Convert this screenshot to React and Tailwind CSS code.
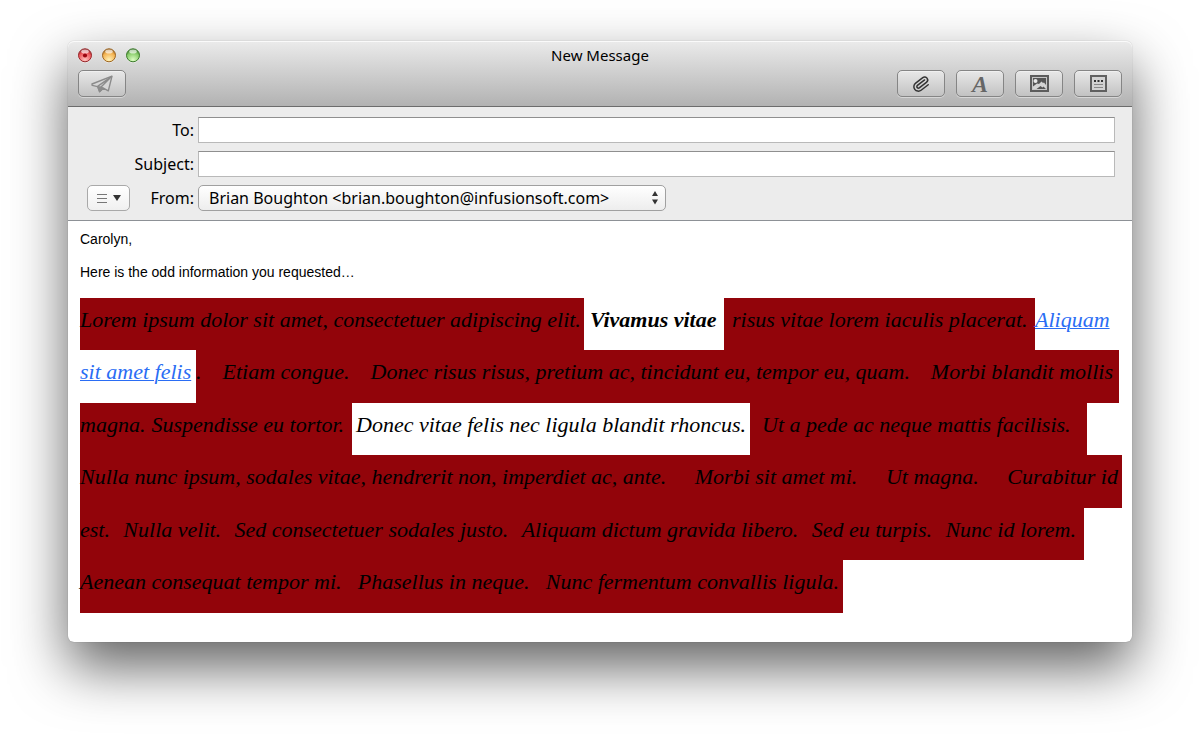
import React from "react";

const toolButton =
  "flex h-[27px] w-[48px] items-center justify-center rounded-[5px] border border-[#858585] bg-gradient-to-b from-[#e8e8e8] to-[#c2c2c2] shadow-[inset_0_1px_0_#f0f0f0,0_1px_0_#d6d6d6]";

const field =
  "h-[26px] w-full border border-[#b9b9b9] border-t-[#8f8f8f] bg-white px-1 text-[16px] outline-none";

function Light({ label, id, dark, mid, glow, dot }) {
  return (
    <button type="button" aria-label={label} className="h-[15px] w-[15px]">
      <svg viewBox="0 0 15 15" className="h-[15px] w-[15px]">
        <defs>
          <radialGradient id={id} cx="50%" cy="85%" r="80%">
            <stop offset="0" stopColor={glow} />
            <stop offset="0.7" stopColor={mid} />
            <stop offset="1" stopColor={dark} />
          </radialGradient>
        </defs>
        <circle cx="7" cy="8" r="7" fill="#fff" opacity="0.5" />
        <circle cx="7" cy="7.3" r="6.5" fill={`url(#${id})`} stroke={dark} strokeWidth="1" />
        <ellipse cx="7" cy="3.6" rx="3.8" ry="2" fill="#fff" opacity="0.65" />
        {dot && <circle cx="7" cy="7.5" r="2.1" fill="#9c0610" />}
      </svg>
    </button>
  );
}

function PlaneIcon() {
  return (
    <svg viewBox="0 0 22 18" className="h-[18px] w-[22px]" fill="none" stroke="#8b8b8b" strokeWidth="1.4" strokeLinejoin="round">
      <path d="M1 9 L21 1.200 L17.300 15.800 L12.400 13.200 L8.600 16.800 L6.600 11.600 L1.200 10.400 Z" fill="#d6d6d6" />
      <path d="M6.600 11.400 L20.500 1.600 L9.800 12.200 L12.400 13.200" />
      <path d="M6.800 11.600 L9.800 12.200 L11.600 13.600 L8.600 16.600 Z" fill="#8b8b8b" />
    </svg>
  );
}

function ClipIcon() {
  return (
    <svg viewBox="0 0 24 24" className="h-[18px] w-[18px]" fill="none" stroke="#333" strokeWidth="2" strokeLinecap="round" strokeLinejoin="round">
      <g transform="rotate(8 12 12)">
        <path d="m16 6-8.414 8.586a2 2 0 0 0 2.829 2.829l8.414-8.586a4 4 0 1 0-5.657-5.657l-8.379 8.551a6 6 0 1 0 8.485 8.485l8.379-8.551" />
      </g>
    </svg>
  );
}

function PhotoIcon() {
  return (
    <svg viewBox="0 0 19 17" className="h-[17px] w-[19px]">
      <rect width="19" height="17" fill="#5c5c5c" />
      <rect x="2" y="2" width="15" height="13" fill="#c6c6c6" />
      <rect x="3" y="3" width="13" height="11" fill="#565656" />
      <path d="M3 14 V11.500 L7 8.500 L9 9 L11.500 6.500 L13 8 L14 7.500 L16 10 V14 L13.500 11.500 L12.500 12.500 L10.500 11 L6.500 14 Z" fill="#d4d4d4" />
      <circle cx="5.500" cy="6" r="2" fill="#e9e9e9" />
    </svg>
  );
}

function StationeryIcon() {
  return (
    <svg viewBox="0 0 17 17" className="h-[17px] w-[17px]">
      <rect width="17" height="17" fill="#606060" />
      <rect x="2" y="2" width="13" height="13" fill="#d2d2d2" />
      <path d="M4 5h2v2H4zM7.500 5h2v2h-2zM11 5h2v2h-2z" fill="#333" />
      <path d="M4 9.500h9M4 12.500h9" stroke="#888" />
    </svg>
  );
}

const mark = "flex shrink-0 justify-between bg-[#92040a]";
const plain = "block shrink-0";
const line = "flex h-[52px] items-stretch";
const tallLine = "flex h-[53px] items-stretch";

function Sentences({ items }) {
  return items.map((text) => <span key={text}>{text}</span>);
}

export default function App() {
  return (
    <div className="min-h-screen bg-white px-[68px] pb-[94px] pt-[41px] text-black">
      <main className="rounded-[6px] bg-white font-['Noto_Sans','Open_Sans',sans-serif] shadow-[0_0_1px_rgba(0,0,0,0.4),0_25px_55px_rgba(0,0,0,0.62)]">
        <header className="rounded-t-[6px] border-b border-[#6c6c6c] bg-gradient-to-b from-[#ebebeb] to-[#b2b2b2] px-[10px] pb-[9px] pt-[4px] shadow-[inset_0_1px_0_#fafafa]">
          <div className="grid h-[20px] grid-cols-[1fr_auto_1fr] items-center">
            <div className="flex gap-[9px]">
              <Light label="Close" id="red" dark="#94262a" mid="#ec5458" glow="#ffc4c0" dot />
              <Light label="Minimize" id="amber" dark="#9a6422" mid="#f3b04e" glow="#fff2b8" />
              <Light label="Zoom" id="green" dark="#3c7a2c" mid="#84c966" glow="#deffc4" />
            </div>
            <h1 className="text-[15px] leading-[20px]">New Message</h1>
          </div>
          <div className="mt-[5px] flex justify-between">
            <button type="button" aria-label="Send" className={toolButton}>
              <PlaneIcon />
            </button>
            <div className="flex gap-[11px]">
              <button type="button" aria-label="Attach" className={toolButton}>
                <ClipIcon />
              </button>
              <button type="button" aria-label="Fonts" className={toolButton}>
                <span className="font-['Liberation_Serif',serif] text-[24px] font-bold italic leading-[24px] text-[#666]">A</span>
              </button>
              <button type="button" aria-label="Photos" className={toolButton}>
                <PhotoIcon />
              </button>
              <button type="button" aria-label="Stationery" className={toolButton}>
                <StationeryIcon />
              </button>
            </div>
          </div>
        </header>

        <form className="flex flex-col gap-[8px] border-b border-[#8d9196] bg-[#ececec] pb-[9px] pl-[19px] pr-[17px] pt-[10px] text-[16px]">
          <div className="flex h-[26px] items-center gap-[4px]">
            <label htmlFor="to" className="w-[107px] shrink-0 text-right">To:</label>
            <input id="to" type="text" className={field} />
          </div>
          <div className="flex h-[26px] items-center gap-[4px]">
            <label htmlFor="subject" className="w-[107px] shrink-0 text-right">Subject:</label>
            <input id="subject" type="text" className={field} />
          </div>
          <div className="flex h-[26px] items-center gap-[4px]">
            <div className="flex w-[107px] shrink-0 items-center justify-between">
              <button
                type="button"
                aria-label="Header fields"
                className="flex h-[26px] w-[43px] items-center justify-center gap-[6px] rounded-[5px] border border-[#a9a9a9] bg-gradient-to-b from-white to-[#f0f0f0]"
              >
                <svg viewBox="0 0 10 10" className="h-[10px] w-[10px]" stroke="#777" strokeWidth="1">
                  <path d="M0 1.5h10M0 5.5h10M0 9.5h10" />
                </svg>
                <svg viewBox="0 0 8 6" className="h-[6px] w-[8px]" fill="#333">
                  <path d="M0 0h8L4 6z" />
                </svg>
              </button>
              <label htmlFor="from">From:</label>
            </div>
            <div className="relative w-[468px]">
              <select
                id="from"
                className="block h-[26px] w-full appearance-none rounded-[5px] border border-[#a0a0a0] bg-gradient-to-b from-white to-[#ededed] pl-[10px] pr-6 text-[16px] leading-[22px] outline-none"
              >
                <option>Brian Boughton &lt;brian.boughton@infusionsoft.com&gt;</option>
              </select>
              <svg viewBox="0 0 6 14" className="pointer-events-none absolute right-[8px] top-[6px] h-[14px] w-[6px]" fill="#333">
                <path d="M0 5h6L3 0zM0 8.500h6L3 13.500z" />
              </svg>
            </div>
          </div>
        </form>

        <article className="px-[12px] pb-[29px] pt-[10px]">
          <div className="font-['Liberation_Sans',Arial,sans-serif] text-[14px] leading-[17px]">
            <p className="mb-[16px]">Carolyn,</p>
            <p className="mb-[17px]">Here is the odd information you requested…</p>
          </div>
          <div className="whitespace-nowrap font-['Liberation_Serif','Times_New_Roman',serif] text-[22px] italic leading-[44px]">
            <div className={line}>
              <span className={`${mark} w-[504px]`}>Lorem ipsum dolor sit amet, consectetuer adipiscing elit. </span>
              <strong className={`${plain} w-[140px] pl-[6px]`}>Vivamus vitae</strong>
              <span className={`${mark} w-[311px] pl-[8px]`}>risus vitae lorem iaculis placerat. </span>
              <a href="#aliquam" className={`${plain} w-[87px] text-[#2a6df4] underline decoration-1`}>Aliquam </a>
            </div>
            <div className={tallLine}>
              <a href="#aliquam" className={`${plain} w-[116px] text-[#2a6df4] underline decoration-1`}>sit amet felis</a>
              <span className={`${mark} w-[923px] pr-[6px]`}>
                <Sentences items={[".", "Etiam congue.", "Donec risus risus, pretium ac, tincidunt eu, tempor eu, quam.", "Morbi blandit mollis"]} />
              </span>
            </div>
            <div className={line}>
              <span className={`${mark} w-[272px] pr-[8px]`}>
                <Sentences items={["magna.", "Suspendisse eu tortor."]} />
              </span>
              <span className={`${plain} w-[398px] pl-[4px]`}>Donec vitae felis nec ligula blandit rhoncus.</span>
              <span className={`${mark} w-[337px] pl-[12px]`}>Ut a pede ac neque mattis facilisis. </span>
            </div>
            <div className={tallLine}>
              <span className={`${mark} w-[1042px] pr-[4px]`}>
                <Sentences items={["Nulla nunc ipsum, sodales vitae, hendrerit non, imperdiet ac, ante.", "Morbi sit amet mi.", "Ut magna.", "Curabitur id"]} />
              </span>
            </div>
            <div className={line}>
              <span className={`${mark} w-[1004px] pr-[8px]`}>
                <Sentences items={["est.", "Nulla velit.", "Sed consectetuer sodales justo.", "Aliquam dictum gravida libero.", "Sed eu turpis.", "Nunc id lorem."]} />
              </span>
            </div>
            <div className={tallLine}>
              <span className={`${mark} w-[763px] pr-[4px]`}>
                <Sentences items={["Aenean consequat tempor mi.", "Phasellus in neque.", "Nunc fermentum convallis ligula."]} />
              </span>
            </div>
          </div>
        </article>
      </main>
    </div>
  );
}
